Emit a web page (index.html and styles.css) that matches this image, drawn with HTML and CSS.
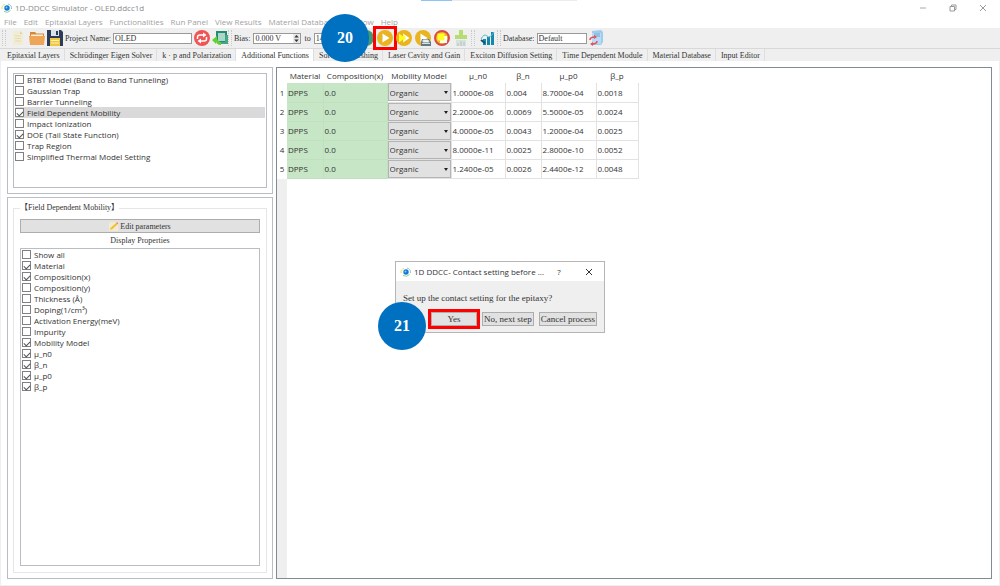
FILE: index.html
```html
<!DOCTYPE html>
<html lang="en">
<head>
<meta charset="utf-8">
<title>1D-DDCC Simulator - OLED.ddcc1d</title>
<link rel="stylesheet" href="styles.css">
</head>
<body>
<svg class="defs" aria-hidden="true">
  <symbol id="logo" viewBox="0 0 12 10">
    <path d="M1 6A3.5 3.5 0 0 1 4 1.5" fill="none" stroke="#e8df62"/>
    <path d="M3 8.500Q7 10.500 9.500 7.500" fill="none" stroke="#8ccf8a"/>
    <path d="M7 1Q11 2 10.500 6" fill="none" stroke="#8bc4ea"/>
    <circle cx="6" cy="5" r="2.700" fill="#1478d4"/><circle cx="5.500" cy="4.500" r="1" fill="#7fd0f8"/>
  </symbol>
  <symbol id="play" viewBox="0 0 16 16"><circle cx="8" cy="8" r="8" fill="#e9b41f"/><path d="M5.500 3.500L12.500 8L5.500 12.500Z" fill="#fff"/></symbol>
</svg>

<header class="titlebar">
  <svg class="logo"><use href="#logo"/></svg>
  <h1 class="title">1D-DDCC Simulator - OLED.ddcc1d</h1>
  <div class="progress"></div>
  <div class="winbtns">
    <button aria-label="Minimize"><svg viewBox="0 0 8 8"><path d="M1 4H7" stroke="#aaa"/></svg></button>
    <button aria-label="Restore"><svg viewBox="0 0 8 8" fill="none" stroke="#999"><path d="M1 2.500H5.500V7H1ZM2.500 2.500V1H7V5.500H5.500"/></svg></button>
    <button aria-label="Close"><svg viewBox="0 0 8 8"><path d="M1 1L7 7M7 1L1 7" stroke="#999"/></svg></button>
  </div>
</header>

<nav class="menubar">
  <button>File</button><button>Edit</button><button>Epitaxial Layers</button><button>Functionalities</button><button>Run Panel</button><button>View Results</button><button>Material Database</button><button>Window</button><button>Help</button>
</nav>

<div class="toolbar">
  <div class="group files">
    <button class="tool" aria-label="New"><svg viewBox="0 0 16 16"><path d="M2 1H9L12 4V15H2Z" fill="#f2ecd0"/><path d="M9 1V4H12Z" fill="#ddd5ae"/><path d="M4 6H10M4 8.500H10M4 11H10" stroke="#e4dcb8"/></svg></button>
    <button class="tool" aria-label="Open"><svg viewBox="0 0 16 16"><path d="M1 2H6L7.500 3.500H15V14H1Z" fill="#d98735"/><path d="M2 4.500H14V7H2Z" fill="#fff0d5"/><path d="M0 6H16L15 15H1Z" fill="#efa557"/></svg></button>
    <button class="tool" aria-label="Save"><svg viewBox="0 0 16 16"><path d="M0 0H14L16 2V16H0Z" fill="#2c3c58"/><path d="M4 0H12V6H4Z" fill="#d9e2ea"/><path d="M9 1H11V5H9Z" fill="#2c3c58"/><path d="M3 8H13V16H3Z" fill="#f0c744"/><path d="M4 10.500H12M4 13H12" stroke="#fff2b0"/></svg></button>
    <label for="project">Project Name:</label>
    <input id="project" class="field name" value="OLED">
    <button class="tool" aria-label="Refresh"><svg viewBox="0 0 16 16"><circle cx="8" cy="8" r="8" fill="#ee5555"/><path d="M3.500 9V7Q3.500 5 6 5H11M12.500 7V9Q12.500 11 10 11H5" fill="none" stroke="#fff" stroke-width="1.500"/><path d="M9 2.500L12.500 5L9 7.500ZM7 8.500L3.500 11L7 13.500Z" fill="#fff"/></svg></button>
    <button class="tool" aria-label="Import"><svg viewBox="0 0 16 16"><path d="M4 1H15V12H4Z" fill="#268b70"/><path d="M6 3H13V11H6Z" fill="#a9d8ca"/><path d="M13 5H16V14H8V12H13Z" fill="#49a386"/><path d="M0 10L5 6V8Q5 11 9 12V15Q5 15 4 12V14Z" fill="#62cf35"/></svg></button>
  </div>
  <div class="group run">
    <label for="bias">Bias:</label>
    <div class="spin"><input id="bias" class="field" value="0.000 V"><svg viewBox="0 0 7 10"><path d="M0 0H7V10H0Z" fill="#e4e4e4"/><path d="M1 4L3.500 1L6 4ZM1 6L3.500 9L6 6Z" fill="#333"/></svg></div>
    <label for="bias-to">to</label>
    <div class="spin last"><input id="bias-to" class="field" value="14.400 V"></div>
    <button class="tool" aria-label="Run step"><svg viewBox="0 0 16 16"><circle cx="8" cy="8" r="8" fill="#3f9a78"/></svg></button>
    <button class="tool marked" aria-label="Run"><svg><use href="#play"/></svg></button>
    <button class="tool" aria-label="Run all"><svg viewBox="0 0 16 16"><circle cx="8" cy="8" r="8" fill="#e9b41f"/><path d="M7 3.500L13.500 8L7 12.500Z" fill="#fff"/><path d="M3 3.500V12.500L7 9.500V12L10 8L7 4V6.500Z" fill="#ffff28"/></svg></button>
    <button class="tool" aria-label="Run and save"><svg viewBox="0 0 16 16"><use href="#play"/><path d="M7 9H14L16 12V16H6V12Z" fill="#647a82"/><path d="M8 10H13L14 12H8ZM7 13.500H15" fill="#fff" stroke="#d7e0e2"/></svg></button>
    <button class="tool" aria-label="Stop"><svg viewBox="0 0 16 16"><circle cx="8" cy="8" r="7" fill="#efb72e" stroke="#d94b43" stroke-width="2"/><path d="M6 6H13V13H6Z" fill="#fff"/><path d="M3.500 3.500H10.500V10.500H3.500Z" fill="#ff2"/></svg></button>
    <button class="tool" aria-label="Clean"><svg viewBox="0 0 16 16"><path d="M6 0H10V5H14V9H2V5H6Z" fill="#b6dd73"/><path d="M3 10H13V16H3Z" fill="#d8e0e0"/><path d="M5 13V16M8 11V16M11 12V16" stroke="#b5c2c4"/></svg></button>
    <span class="badge badge-run">20</span>
  </div>
  <div class="group plot">
    <button class="tool" aria-label="Plot"><svg viewBox="0 0 16 16"><path d="M3 9H6V15H3ZM7 7H10V15H7ZM11 2H14V15H11Z" fill="#1688ae"/><path d="M1 9Q4 3 7 6T14 2" fill="none" stroke="#55b9cd"/><path d="M1 10L5 13" stroke="#17516e" stroke-width="2"/></svg></button>
  </div>
  <div class="group data">
    <label for="database">Database:</label>
    <input id="database" class="field" value="Default">
    <button class="tool" aria-label="Reload database"><svg viewBox="0 0 16 16"><path d="M3 1L12 0L14 2V12L12 15H3Z" fill="#9fcbed"/><path d="M3 3H12V14H3Z" fill="#b9dcf5"/><path d="M5 4H11M5 6H11" stroke="#6aa1ce"/><path d="M1 10Q1 7 6 7M8 11Q8 14 3 14" fill="none" stroke="#e6505e" stroke-width="1.500"/><path d="M5 5L8 7L5 9ZM4 12L1 14L4 16Z" fill="#e6505e"/></svg></button>
  </div>
</div>

<div class="tabs" role="tablist">
  <button role="tab">Epitaxial Layers</button><button role="tab">Schrödinger Eigen Solver</button><button role="tab">k · p and Polarization</button><button role="tab" class="active" aria-selected="true">Additional Functions</button><button role="tab">Solver &amp; Meshing</button><button role="tab">Laser Cavity and Gain</button><button role="tab">Exciton Diffusion Setting</button><button role="tab">Time Dependent Module</button><button role="tab">Material Database</button><button role="tab">Input Editor</button>
</div>

<main class="page">
  <aside class="side">
    <section class="panel models">
      <div class="list">
        <label><input type="checkbox">BTBT Model (Band to Band Tunneling)</label>
        <label><input type="checkbox">Gaussian Trap</label>
        <label><input type="checkbox">Barrier Tunneling</label>
        <label class="selected"><input type="checkbox" checked>Field Dependent Mobility</label>
        <label><input type="checkbox">Impact Ionization</label>
        <label><input type="checkbox" checked>DOE (Tail State Function)</label>
        <label><input type="checkbox">Trap Region</label>
        <label><input type="checkbox">Simplified Thermal Model Setting</label>
      </div>
    </section>
    <section class="panel detail">
      <fieldset class="box">
        <legend>【Field Dependent Mobility】</legend>
        <div class="stack">
          <button class="edit"><svg viewBox="0 0 10 10"><path d="M0 0H10V10H0Z" fill="#f1ebcf"/><path d="M1 9L2 6.500L8 1L9.500 2.500L3.500 8Z" fill="#f2bd32"/><path d="M8 1L9 0L10 1.500L9.500 2.500Z" fill="#ed6c5b"/></svg>Edit parameters</button>
          <p class="caption">Display Properties</p>
          <div class="list props">
            <label><input type="checkbox">Show all</label>
            <label><input type="checkbox" checked>Material</label>
            <label><input type="checkbox" checked>Composition(x)</label>
            <label><input type="checkbox">Composition(y)</label>
            <label><input type="checkbox">Thickness (Å)</label>
            <label><input type="checkbox">Doping(1/cm³)</label>
            <label><input type="checkbox">Activation Energy(meV)</label>
            <label><input type="checkbox">Impurity</label>
            <label><input type="checkbox" checked>Mobility Model</label>
            <label><input type="checkbox" checked>μ_n0</label>
            <label><input type="checkbox" checked>β_n</label>
            <label><input type="checkbox" checked>μ_p0</label>
            <label><input type="checkbox" checked>β_p</label>
          </div>
        </div>
      </fieldset>
    </section>
  </aside>
  <section class="sheet">
    <table class="grid">
      <colgroup><col class="c-row"><col class="c-mat"><col class="c-comp"><col class="c-mob"><col class="c-mun"><col class="c-bn"><col class="c-mup"><col class="c-bp"></colgroup>
      <thead><tr><td></td><th>Material</th><th>Composition(x)</th><th>Mobility Model</th><th>μ_n0</th><th>β_n</th><th>μ_p0</th><th>β_p</th></tr></thead>
      <tbody>
        <tr><th>1</th><td class="g">DPPS</td><td class="g">0.0</td><td class="m"><select aria-label="Mobility model 1"><option>Organic</option></select></td><td>1.0000e-08</td><td>0.004</td><td>8.7000e-04</td><td>0.0018</td></tr>
        <tr><th>2</th><td class="g">DPPS</td><td class="g">0.0</td><td class="m"><select aria-label="Mobility model 2"><option>Organic</option></select></td><td>2.2000e-06</td><td>0.0069</td><td>5.5000e-05</td><td>0.0024</td></tr>
        <tr><th>3</th><td class="g">DPPS</td><td class="g">0.0</td><td class="m"><select aria-label="Mobility model 3"><option>Organic</option></select></td><td>4.0000e-05</td><td>0.0043</td><td>1.2000e-04</td><td>0.0025</td></tr>
        <tr><th>4</th><td class="g">DPPS</td><td class="g">0.0</td><td class="m"><select aria-label="Mobility model 4"><option>Organic</option></select></td><td>8.0000e-11</td><td>0.0025</td><td>2.8000e-10</td><td>0.0052</td></tr>
        <tr><th>5</th><td class="g">DPPS</td><td class="g">0.0</td><td class="m"><select aria-label="Mobility model 5"><option>Organic</option></select></td><td>1.2400e-05</td><td>0.0026</td><td>2.4400e-12</td><td>0.0048</td></tr>
      </tbody>
    </table>
  </section>
</main>

<div class="dialog" role="dialog" aria-labelledby="dlg-title">
  <div class="dlg-head">
    <svg class="logo"><use href="#logo"/></svg>
    <h2 class="dlg-title" id="dlg-title">1D DDCC- Contact setting before ...</h2>
    <button class="help" aria-label="Help">?</button>
    <button aria-label="Close dialog"><svg viewBox="0 0 8 8"><path d="M1 1L7 7M7 1L1 7" stroke="#333"/></svg></button>
  </div>
  <p class="dlg-text">Set up the contact setting for the epitaxy?</p>
  <div class="dlg-actions">
    <button class="marked">Yes</button><button>No, next step</button><button>Cancel process</button>
  </div>
  <span class="badge badge-yes">21</span>
</div>
</body>
</html>
```
FILE: styles.css
```css
* { box-sizing: border-box; }
body {
  margin: 0;
  min-height: 100vh;
  display: flex;
  flex-direction: column;
  background: #efefef;
  color: #333;
  font-family: "Open Sans", "Noto Sans", sans-serif;
  font-size: 8px;
}
h1, h2, p { margin: 0; font-weight: normal; }
button, input, select { font: inherit; color: inherit; margin: 0; padding: 0; border: 0; background: none; border-radius: 0; }
button, label { white-space: nowrap; }
svg { display: block; }
.defs { position: absolute; width: 0; height: 0; }
.logo { width: 12px; height: 10px; flex: none; }

.titlebar { display: flex; align-items: center; height: 15px; padding: 0 10px 0 1px; background: #fff; color: #8c8c8c; }
.title { margin-left: 2px; font-size: 8px; line-height: 15px; }
.progress { position: absolute; top: 0; left: 421px; width: 156px; height: 1px; background: linear-gradient(90deg, #8bc4f5 20%, #ececec 20%); }
.winbtns { display: flex; gap: 16px; margin-left: auto; }
.winbtns button { width: 14px; display: flex; justify-content: center; }
.winbtns svg { width: 8px; height: 8px; }

.menubar { display: flex; gap: 7px; height: 13px; padding: 0 4px; background: #fff; color: #a2a2a2; }
.menubar button { line-height: 13px; }

.toolbar {
  display: flex;
  height: 21px;
  border-bottom: 1px solid #d8d8d8;
  font-family: "Liberation Serif", serif;
}
.group { position: relative; display: flex; align-items: center; gap: 3px; }
.group::before { content: ""; width: 2px; height: 16px; border: 1px dotted #c8c8c8; border-width: 0 1px; }
.files { width: 228px; padding-left: 2px; gap: 2px; }
.files::before { margin-right: 3px; }
.run { width: 242px; gap: 3px; }
.run::before { margin-right: -1px; }
.plot { width: 27px; gap: 5px; padding-left: 1px; }
.data { gap: 2px; }
.tool { width: 16px; height: 16px; flex: none; position: relative; }
.tool svg { width: 100%; height: 100%; }
.field { height: 11px; padding: 0 1px; border: 1px solid #999; background: #fff; flex: none; width: 50px; }
.field.name { width: 79px; }
.spin { position: relative; display: flex; flex: none; }
.spin .field { width: 48px; }
.spin.last .field { width: 41px; }
.spin svg { position: absolute; right: 1px; top: 1px; width: 7px; height: 9px; }
.tool.marked::after { content: ""; position: absolute; inset: -4px; border: 3px solid #ff0000; }

.badge {
  position: absolute;
  width: 48px;
  height: 48px;
  border-radius: 50%;
  background: #0070c0;
  color: #fff;
  font: bold 16px/48px "Liberation Serif", serif;
  text-align: center;
}
.badge-run { left: 93px; top: -14px; }

.tabs { display: flex; height: 12px; padding-left: 2px; font-family: "Liberation Serif", serif; }
.tabs button { padding: 1px 4px 0 5px; border-right: 1px solid #dedede; line-height: 11px; }
.tabs .active { background: #fff; }

.page {
  flex: 1;
  display: flex;
  gap: 3px;
  margin: 0 1px 1px;
  padding: 6px 7px 6px 6px;
  background: #fff;
}
.side { width: 266px; flex: none; display: flex; flex-direction: column; gap: 3px; }
.panel { border: 1px solid #b9bdc4; padding: 5px; }
.models { height: 127px; }
.models .list { height: 100%; }
.detail { flex: 1; display: flex; }
.list { display: flex; flex-direction: column; border: 1px solid #b9bdc4; padding: 0 1px; }
.list label { display: flex; align-items: center; gap: 3px; height: 11px; flex: none; line-height: 11px; }
.list .selected { background: #d9d9d9; }
.list input { appearance: none; width: 9px; height: 9px; border: 1px solid #808080; background: #fff; display: grid; place-items: center; }
.list input:checked::after { content: ""; width: 5px; height: 3px; border: solid #555; border-width: 0 0 1px 1px; transform: rotate(-45deg); }
.box { flex: 1; min-width: 0; margin: 0; padding: 6px; border: 1px solid #e6e6e6; display: flex; font-family: "Liberation Serif", serif; }
.box legend { padding: 0; font-family: "Liberation Serif", "Noto Sans CJK TC", serif; line-height: 10px; }
.stack { flex: 1; display: flex; flex-direction: column; }
.edit { height: 14px; display: flex; align-items: center; justify-content: center; gap: 2px; background: #e1e1e1; border: 1px solid #adadad; }
.edit svg { width: 9px; height: 9px; }
.caption { line-height: 15px; text-align: center; }
.props { flex: 1; font-family: "Open Sans", "Noto Sans", sans-serif; }

.sheet { flex: 1; border: 1px solid #828a94; background: linear-gradient(90deg, #efefef 10px, #fff 10px); }
.grid { table-layout: fixed; width: 361px; border-collapse: collapse; background: #fff; }
.grid td, .grid th { height: 19px; padding: 0 0 0 1px; border: solid #e2e2e2; border-width: 0 1px 1px 0; font-weight: normal; text-align: left; line-height: 11px; white-space: nowrap; }
.grid thead th, .grid thead td { height: 15px; border: 0; padding: 0; text-align: center; }
.grid tbody th { border: 0; padding: 0; text-align: center; }
.grid .g { background: #c6e6c6; border-color: #c0e0c0; }
.grid .m { padding: 0; position: relative; }
.m select { appearance: none; display: block; width: 100%; height: 18px; padding-left: 1px; background: #e1e1e1; border: 1px solid #b4b4b4; }
.m::after { content: ""; position: absolute; right: 3px; top: 8px; border: solid transparent; border-width: 3px 2px 0; border-top-color: #222; }
.c-row { width: 10px; }
.c-mat { width: 36px; }
.c-comp, .c-mob { width: 64px; }
.c-mun { width: 54px; }
.c-bn { width: 36px; }
.c-mup { width: 55px; }
.c-bp { width: 42px; }

.dialog { position: absolute; left: 395px; top: 261px; width: 210px; border: 1px solid #b5b5b5; background: #efefef; }
.dlg-head { display: flex; align-items: center; height: 19px; padding: 0 11px 0 4px; background: #fff; }
.dlg-title { flex: 1; margin-left: 2px; font-size: 8px; white-space: nowrap; }
.dlg-head button { width: 8px; height: 8px; margin-left: 22px; line-height: 8px; }
.dlg-head .help { margin: 0; }
.dlg-text { padding: 11px 7px 4px; font: 9px/12px "Liberation Serif", serif; }
.dlg-actions { display: flex; justify-content: flex-end; gap: 5px; padding: 4px 7px 6px; font: 9px/12px "Liberation Serif", serif; }
.dlg-actions button { height: 14px; padding: 0 1px; border: 1px solid #adadad; background: #e1e1e1; }
.dlg-actions .marked { width: 46px; outline: 3px solid #ff0000; }
.badge-yes { left: -18px; top: 40px; }
```
